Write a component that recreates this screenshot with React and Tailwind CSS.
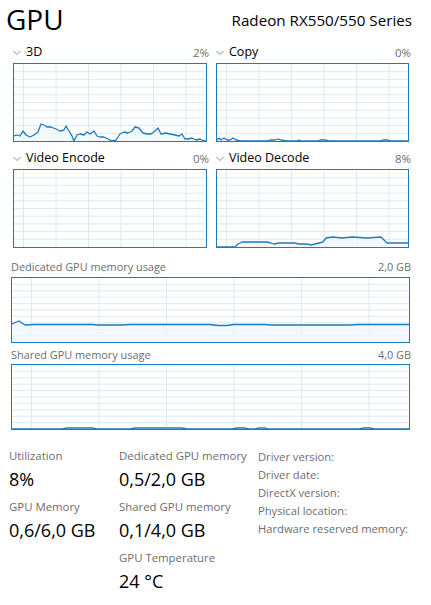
import React from 'react';

const BLUE = '#1b7bbd';
const GRID = '#d9eaf4';
const FILL = '#f1f6fa';

// little graph panel: grid + optional usage line
const Graph = ({ w, h, vstep, voff, rows, points, className = '' }) => {
  const iw = w - 2;
  const ih = h - 2;
  const vlines = [];
  for (let x = voff; x < iw; x += vstep) vlines.push(x);
  const hlines = [];
  for (let i = 1; i < rows; i++) hlines.push((ih / rows) * i);
  const line = points ? points.map(([x, y]) => `${x},${y}`).join(' ') : '';
  const area = points
    ? `${points[0][0]},${ih} ${line} ${points[points.length - 1][0]},${ih}`
    : '';
  return (
    <div className={`border border-[#1b7bbd] bg-white ${className}`} style={{ width: w, height: h }}>
      <svg width={iw} height={ih} viewBox={`0 0 ${iw} ${ih}`} className="block">
        {hlines.map((y) => (
          <line key={'h' + y} x1="0" x2={iw} y1={y} y2={y} stroke={GRID} strokeWidth="1" />
        ))}
        {vlines.map((x) => (
          <line key={'v' + x} x1={x} x2={x} y1="0" y2={ih} stroke={GRID} strokeWidth="1" />
        ))}
        {points && <polygon points={area} fill={FILL} fillOpacity="0.8" />}
        {points && <polyline points={line} fill="none" stroke={BLUE} strokeWidth="1.3" strokeLinejoin="round" />}
      </svg>
    </div>
  );
};

const Chevron = () => (
  <svg width="8" height="6" viewBox="0 0 8 6" className="mr-[5px]">
    <polyline points="0.5,1 4,4.5 7.5,1" fill="none" stroke="#8a8a8a" strokeWidth="1" />
  </svg>
);

const EngineHeader = ({ name, value }) => (
  <div className="flex items-center justify-between h-[21px] -mr-[2px]">
    <div className="flex items-center text-[12.5px] text-black">
      <Chevron />
      {name}
    </div>
    <span className="text-[11.5px] text-[#6d6d6d]">{value}</span>
  </div>
);

const d3 = [
  [0, 72], [3, 71], [6, 72], [9, 67], [12, 71], [16, 73], [20, 71], [24, 68], [27, 60], [30, 61], [33, 63],
  [37, 63], [42, 65], [46, 67], [50, 66], [52, 62], [55, 67], [58, 72], [60, 77], [63, 71], [66, 70], [70, 71],
  [73, 68], [76, 70], [80, 67], [83, 72], [86, 73], [90, 73], [94, 75], [98, 77], [102, 76], [106, 70],
  [110, 68], [114, 69], [118, 67], [121, 63], [125, 64], [129, 69], [133, 70], [137, 70], [141, 67],
  [144, 64], [147, 70], [152, 69], [156, 70], [161, 71], [165, 72], [168, 70], [171, 75], [174, 75],
  [178, 74], [182, 76], [186, 75], [190, 77], [192, 77],
];

const copy = [
  [0, 76], [2, 74], [4, 76], [7, 74], [10, 76], [13, 76], [16, 74], [19, 76], [24, 77], [50, 77], [53, 76],
  [58, 76], [61, 75], [64, 76], [70, 77], [80, 77], [82, 76], [85, 77], [100, 77], [103, 76], [108, 76],
  [112, 77], [163, 77], [166, 76], [171, 76], [174, 77], [192, 77],
];

const decode = [
  [0, 77], [18, 77], [21, 74], [25, 72], [50, 72], [54, 73], [57, 74], [62, 73], [78, 73], [82, 74],
  [90, 74], [94, 75], [98, 74], [102, 73], [106, 72], [109, 68], [116, 67], [125, 68], [135, 67],
  [150, 68], [164, 67], [170, 73], [191, 73],
];

const dedicated = [
  [0, 46], [7, 43], [13, 47], [22, 46.5], [80, 46.5], [86, 47], [110, 47], [118, 46.5], [198, 46.5],
  [206, 47.5], [214, 47.5], [222, 46.5], [252, 46.5], [260, 47], [338, 47], [346, 46.5], [397, 46.5],
];

const shared = [
  [0, 64], [50, 64], [55, 63], [80, 63], [85, 64], [118, 64], [123, 63], [170, 63], [175, 64], [220, 64],
  [225, 63], [232, 63], [237, 64], [243, 64], [247, 63], [252, 63], [256, 64], [347, 64], [352, 63],
  [358, 63], [362, 64], [397, 64],
];

const Stat = ({ label, value }) => (
  <div className="h-[51px]">
    <div className="text-[11.4px] text-[#6d6d6d] leading-[16px]">{label}</div>
    <div className="text-[18px] text-black leading-[26px] mt-[2px]">{value}</div>
  </div>
);

export default function App() {
  return (
    <div className="w-[431px] h-[605px] bg-white overflow-hidden font-['Open_Sans',sans-serif]">
      {/* title */}
      <div className="flex items-end justify-between h-[36px] pl-[6px] pr-[19px]">
        <span className="text-[28px] leading-[34px] text-black">GPU</span>
        <span className="text-[15.2px] leading-[22px] text-black mb-[5px]">Radeon RX550/550 Series</span>
      </div>

      {/* engines */}
      <div className="grid grid-cols-[194px_193px] gap-x-[9px] pl-[13px] mt-[6px]">
        <div>
          <EngineHeader name="3D" value="2%" />
          <Graph w={194} h={79} vstep={32.5} voff={9.5} rows={10} points={d3} />
        </div>
        <div>
          <EngineHeader name="Copy" value="0%" />
          <Graph w={193} h={79} vstep={32.5} voff={9.5} rows={10} points={copy} />
        </div>
        <div className="mt-[6px]">
          <EngineHeader name="Video Encode" value="0%" />
          <Graph w={194} h={79} vstep={32.5} voff={9.5} rows={10} />
        </div>
        <div className="mt-[6px]">
          <EngineHeader name="Video Decode" value="8%" />
          <Graph w={193} h={79} vstep={32.5} voff={9.5} rows={10} points={decode} />
        </div>
      </div>

      {/* memory */}
      <div className="pl-[11px] pr-[21px]">
        <div className="flex justify-between items-end h-[29px] pb-[2px] text-[10.9px] text-[#6d6d6d]">
          <span>Dedicated GPU memory usage</span>
          <span className="-mr-px">2,0 GB</span>
        </div>
        <Graph w={399} h={66} vstep={67.5} voff={19.5} rows={10} points={dedicated} />
        <div className="flex justify-between items-end h-[21px] pb-[1px] text-[10.9px] text-[#6d6d6d]">
          <span>Shared GPU memory usage</span>
          <span className="-mr-px">4,0 GB</span>
        </div>
        <Graph w={399} h={66} vstep={67.5} voff={19.5} rows={10} points={shared} />
      </div>

      {/* stats */}
      <div className="flex pl-[9px] pt-[18px]">
        <div className="w-[110px]">
          <Stat label="Utilization" value="8%" />
          <Stat label="GPU Memory" value="0,6/6,0 GB" />
        </div>
        <div className="w-[139px]">
          <Stat label="Dedicated GPU memory" value="0,5/2,0 GB" />
          <Stat label="Shared GPU memory" value="0,1/4,0 GB" />
          <Stat label="GPU Temperature" value="24 °C" />
        </div>
        <div className="text-[11.2px] text-[#6d6d6d] leading-[18px]">
          <div>Driver version:</div>
          <div>Driver date:</div>
          <div>DirectX version:</div>
          <div>Physical location:</div>
          <div>Hardware reserved memory:</div>
        </div>
      </div>
    </div>
  );
}
